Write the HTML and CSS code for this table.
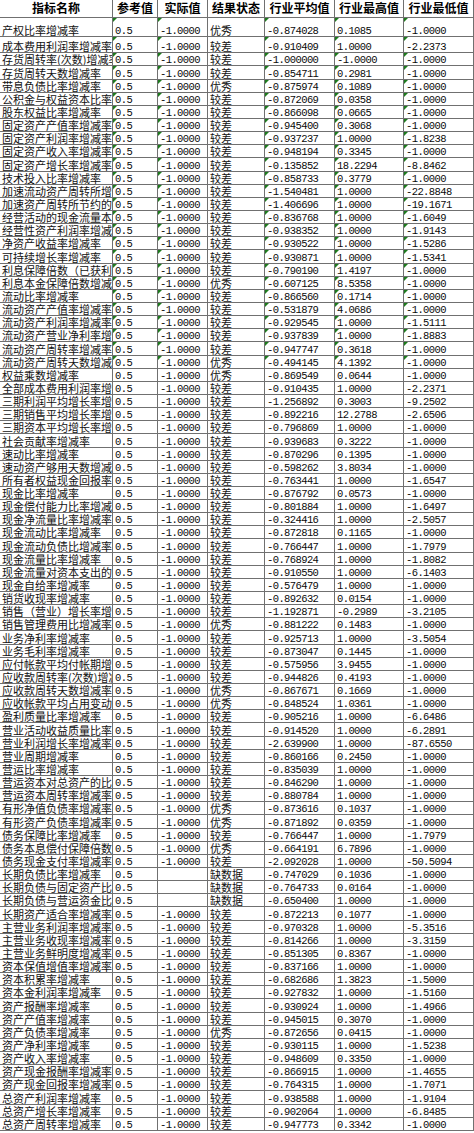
FILE: index.html
```html
<!DOCTYPE html>
<html lang="zh-CN">
<head>
<meta charset="utf-8">
<title>指标对比</title>
<link rel="stylesheet" href="styles.css">
</head>
<body>
<div class="t">
<div class="r h"><span>指标名称</span><span>参考值</span><span>实际值</span><span>结果状态</span><span>行业平均值</span><span>行业最高值</span><span>行业最低值</span></div>
<div class="r m r1"><span>产权比率增减率</span><span class="n">0.5</span><span class="n">-1.0000</span><span>优秀</span><span class="n">-0.874028</span><span class="n">0.1085</span><span class="n">-1.0000</span></div>
<div class="r m r2"><span>成本费用利润率增减率</span><span class="n">0.5</span><span class="n">-1.0000</span><span>较差</span><span class="n">-0.910409</span><span class="n">1.0000</span><span class="n">-2.2373</span></div>
<div class="r m"><span>存货周转率(次数)增减率</span><span class="n">0.5</span><span class="n">-1.0000</span><span>较差</span><span class="n">-1.000000</span><span class="n">-1.0000</span><span class="n">-1.0000</span></div>
<div class="r m"><span>存货周转天数增减率</span><span class="n">0.5</span><span class="n">-1.0000</span><span>较差</span><span class="n">-0.854711</span><span class="n">0.2981</span><span class="n">-1.0000</span></div>
<div class="r m"><span>带息负债比率增减率</span><span class="n">0.5</span><span class="n">-1.0000</span><span>优秀</span><span class="n">-0.875974</span><span class="n">0.1089</span><span class="n">-1.0000</span></div>
<div class="r m"><span>公积金与权益资本比率</span><span class="n">0.5</span><span class="n">-1.0000</span><span>较差</span><span class="n">-0.872069</span><span class="n">0.0358</span><span class="n">-1.0000</span></div>
<div class="r m"><span>股东权益比率增减率</span><span class="n">0.5</span><span class="n">-1.0000</span><span>较差</span><span class="n">-0.866098</span><span class="n">0.0665</span><span class="n">-1.0000</span></div>
<div class="r m"><span>固定资产产值率增减率</span><span class="n">0.5</span><span class="n">-1.0000</span><span>较差</span><span class="n">-0.945400</span><span class="n">0.3068</span><span class="n">-1.0000</span></div>
<div class="r m"><span>固定资产利润率增减率</span><span class="n">0.5</span><span class="n">-1.0000</span><span>较差</span><span class="n">-0.937237</span><span class="n">1.0000</span><span class="n">-1.8238</span></div>
<div class="r m"><span>固定资产收入率增减率</span><span class="n">0.5</span><span class="n">-1.0000</span><span>较差</span><span class="n">-0.948194</span><span class="n">0.3345</span><span class="n">-1.0000</span></div>
<div class="r m"><span>固定资产增长率增减率</span><span class="n">0.5</span><span class="n">-1.0000</span><span>较差</span><span class="n">-0.135852</span><span class="n">18.2294</span><span class="n">-8.8462</span></div>
<div class="r m"><span>技术投入比率增减率</span><span class="n">0.5</span><span class="n">-1.0000</span><span>较差</span><span class="n">-0.858733</span><span class="n">0.3779</span><span class="n">-1.0000</span></div>
<div class="r m"><span>加速流动资产周转所增加</span><span class="n">0.5</span><span class="n">-1.0000</span><span>较差</span><span class="n">-1.540481</span><span class="n">1.0000</span><span class="n">-22.8848</span></div>
<div class="r m"><span>加速资产周转所节约的资</span><span class="n">0.5</span><span class="n">-1.0000</span><span>较差</span><span class="n">-1.406696</span><span class="n">1.0000</span><span class="n">-19.1671</span></div>
<div class="r m"><span>经营活动的现金流量本</span><span class="n">0.5</span><span class="n">-1.0000</span><span>较差</span><span class="n">-0.836768</span><span class="n">1.0000</span><span class="n">-1.6049</span></div>
<div class="r m"><span>经营性资产利润率增减率</span><span class="n">0.5</span><span class="n">-1.0000</span><span>较差</span><span class="n">-0.938352</span><span class="n">1.0000</span><span class="n">-1.9143</span></div>
<div class="r m"><span>净资产收益率增减率</span><span class="n">0.5</span><span class="n">-1.0000</span><span>较差</span><span class="n">-0.930522</span><span class="n">1.0000</span><span class="n">-1.5286</span></div>
<div class="r m"><span>可持续增长率增减率</span><span class="n">0.5</span><span class="n">-1.0000</span><span>较差</span><span class="n">-0.930871</span><span class="n">1.0000</span><span class="n">-1.5341</span></div>
<div class="r m"><span>利息保障倍数（已获利息</span><span class="n">0.5</span><span class="n">-1.0000</span><span>较差</span><span class="n">-0.790190</span><span class="n">1.4197</span><span class="n">-1.0000</span></div>
<div class="r m"><span>利息本金保障倍数增减率</span><span class="n">0.5</span><span class="n">-1.0000</span><span>优秀</span><span class="n">-0.607125</span><span class="n">8.5358</span><span class="n">-1.0000</span></div>
<div class="r m"><span>流动比率增减率</span><span class="n">0.5</span><span class="n">-1.0000</span><span>较差</span><span class="n">-0.866560</span><span class="n">0.1714</span><span class="n">-1.0000</span></div>
<div class="r m"><span>流动资产产值率增减率</span><span class="n">0.5</span><span class="n">-1.0000</span><span>较差</span><span class="n">-0.531879</span><span class="n">4.0686</span><span class="n">-1.0000</span></div>
<div class="r m"><span>流动资产利润率增减率</span><span class="n">0.5</span><span class="n">-1.0000</span><span>较差</span><span class="n">-0.929545</span><span class="n">1.0000</span><span class="n">-1.5111</span></div>
<div class="r m"><span>流动资产营业净利率增减</span><span class="n">0.5</span><span class="n">-1.0000</span><span>较差</span><span class="n">-0.937839</span><span class="n">1.0000</span><span class="n">-1.8883</span></div>
<div class="r m"><span>流动资产周转率增减率</span><span class="n">0.5</span><span class="n">-1.0000</span><span>较差</span><span class="n">-0.947747</span><span class="n">0.3618</span><span class="n">-1.0000</span></div>
<div class="r m"><span>流动资产周转天数增减率</span><span class="n">0.5</span><span class="n">-1.0000</span><span>优秀</span><span class="n">-0.494145</span><span class="n">4.1392</span><span class="n">-1.0000</span></div>
<div class="r"><span>权益乘数增减率</span><span class="n">0.5</span><span class="n">-1.0000</span><span>优秀</span><span class="n">-0.869549</span><span class="n">0.0644</span><span class="n">-1.0000</span></div>
<div class="r"><span>全部成本费用利润率增减</span><span class="n">0.5</span><span class="n">-1.0000</span><span>较差</span><span class="n">-0.910435</span><span class="n">1.0000</span><span class="n">-2.2371</span></div>
<div class="r"><span>三期利润平均增长率增减</span><span class="n">0.5</span><span class="n">-1.0000</span><span>较差</span><span class="n">-1.256892</span><span class="n">0.3003</span><span class="n">-9.2502</span></div>
<div class="r"><span>三期销售平均增长率增减</span><span class="n">0.5</span><span class="n">-1.0000</span><span>较差</span><span class="n">-0.892216</span><span class="n">12.2788</span><span class="n">-2.6506</span></div>
<div class="r"><span>三期资本平均增长率增减</span><span class="n">0.5</span><span class="n">-1.0000</span><span>较差</span><span class="n">-0.796869</span><span class="n">1.0000</span><span class="n">-1.0000</span></div>
<div class="r"><span>社会贡献率增减率</span><span class="n">0.5</span><span class="n">-1.0000</span><span>较差</span><span class="n">-0.939683</span><span class="n">0.3222</span><span class="n">-1.0000</span></div>
<div class="r"><span>速动比率增减率</span><span class="n">0.5</span><span class="n">-1.0000</span><span>较差</span><span class="n">-0.870296</span><span class="n">0.1395</span><span class="n">-1.0000</span></div>
<div class="r"><span>速动资产够用天数增减率</span><span class="n">0.5</span><span class="n">-1.0000</span><span>较差</span><span class="n">-0.598262</span><span class="n">3.8034</span><span class="n">-1.0000</span></div>
<div class="r"><span>所有者权益现金回报率</span><span class="n">0.5</span><span class="n">-1.0000</span><span>较差</span><span class="n">-0.763441</span><span class="n">1.0000</span><span class="n">-1.6547</span></div>
<div class="r"><span>现金比率增减率</span><span class="n">0.5</span><span class="n">-1.0000</span><span>较差</span><span class="n">-0.876792</span><span class="n">0.0573</span><span class="n">-1.0000</span></div>
<div class="r"><span>现金偿付能力比率增减率</span><span class="n">0.5</span><span class="n">-1.0000</span><span>较差</span><span class="n">-0.801884</span><span class="n">1.0000</span><span class="n">-1.6497</span></div>
<div class="r"><span>现金净流量比率增减率</span><span class="n">0.5</span><span class="n">-1.0000</span><span>较差</span><span class="n">-0.324416</span><span class="n">1.0000</span><span class="n">-2.5057</span></div>
<div class="r"><span>现金流动比率增减率</span><span class="n">0.5</span><span class="n">-1.0000</span><span>较差</span><span class="n">-0.872818</span><span class="n">0.1165</span><span class="n">-1.0000</span></div>
<div class="r"><span>现金流动负债比增减率</span><span class="n">0.5</span><span class="n">-1.0000</span><span>较差</span><span class="n">-0.766447</span><span class="n">1.0000</span><span class="n">-1.7979</span></div>
<div class="r"><span>现金流量比率增减率</span><span class="n">0.5</span><span class="n">-1.0000</span><span>较差</span><span class="n">-0.768924</span><span class="n">1.0000</span><span class="n">-1.8082</span></div>
<div class="r"><span>现金流量对资本支出的比</span><span class="n">0.5</span><span class="n">-1.0000</span><span>较差</span><span class="n">-0.910550</span><span class="n">1.0000</span><span class="n">-6.1403</span></div>
<div class="r"><span>现金自给率增减率</span><span class="n">0.5</span><span class="n">-1.0000</span><span>较差</span><span class="n">-0.576479</span><span class="n">1.0000</span><span class="n">-1.0000</span></div>
<div class="r"><span>销货收现率增减率</span><span class="n">0.5</span><span class="n">-1.0000</span><span>较差</span><span class="n">-0.892632</span><span class="n">0.0154</span><span class="n">-1.0000</span></div>
<div class="r"><span>销售（营业）增长率增减率</span><span class="n">0.5</span><span class="n">-1.0000</span><span>较差</span><span class="n">-1.192871</span><span class="n">-0.2989</span><span class="n">-3.2105</span></div>
<div class="r"><span>销售管理费用比增减率</span><span class="n">0.5</span><span class="n">-1.0000</span><span>优秀</span><span class="n">-0.881222</span><span class="n">0.1483</span><span class="n">-1.0000</span></div>
<div class="r"><span>业务净利率增减率</span><span class="n">0.5</span><span class="n">-1.0000</span><span>较差</span><span class="n">-0.925713</span><span class="n">1.0000</span><span class="n">-3.5054</span></div>
<div class="r"><span>业务毛利率增减率</span><span class="n">0.5</span><span class="n">-1.0000</span><span>较差</span><span class="n">-0.873047</span><span class="n">0.1445</span><span class="n">-1.0000</span></div>
<div class="r"><span>应付帐款平均付帐期增减</span><span class="n">0.5</span><span class="n">-1.0000</span><span>较差</span><span class="n">-0.575956</span><span class="n">3.9455</span><span class="n">-1.0000</span></div>
<div class="r"><span>应收款周转率(次数)增减率</span><span class="n">0.5</span><span class="n">-1.0000</span><span>较差</span><span class="n">-0.944826</span><span class="n">0.4193</span><span class="n">-1.0000</span></div>
<div class="r"><span>应收款周转天数增减率</span><span class="n">0.5</span><span class="n">-1.0000</span><span>优秀</span><span class="n">-0.867671</span><span class="n">0.1669</span><span class="n">-1.0000</span></div>
<div class="r"><span>应收帐款平均占用变动率</span><span class="n">0.5</span><span class="n">-1.0000</span><span>优秀</span><span class="n">-0.848524</span><span class="n">1.0361</span><span class="n">-1.0000</span></div>
<div class="r"><span>盈利质量比率增减率</span><span class="n">0.5</span><span class="n">-1.0000</span><span>较差</span><span class="n">-0.905216</span><span class="n">1.0000</span><span class="n">-6.6486</span></div>
<div class="r"><span>营业活动收益质量比率</span><span class="n">0.5</span><span class="n">-1.0000</span><span>较差</span><span class="n">-0.914520</span><span class="n">1.0000</span><span class="n">-6.2891</span></div>
<div class="r"><span>营业利润增长率增减率</span><span class="n">0.5</span><span class="n">-1.0000</span><span>较差</span><span class="n">-2.639900</span><span class="n">1.0000</span><span class="n">-87.6550</span></div>
<div class="r"><span>营业周期增减率</span><span class="n">0.5</span><span class="n">-1.0000</span><span>较差</span><span class="n">-0.860166</span><span class="n">0.2450</span><span class="n">-1.0000</span></div>
<div class="r"><span>营运比率增减率</span><span class="n">0.5</span><span class="n">-1.0000</span><span>较差</span><span class="n">-0.835039</span><span class="n">1.0000</span><span class="n">-1.0000</span></div>
<div class="r"><span>营运资本对总资产的比率</span><span class="n">0.5</span><span class="n">-1.0000</span><span>较差</span><span class="n">-0.846290</span><span class="n">1.0000</span><span class="n">-1.0000</span></div>
<div class="r"><span>营运资本周转率增减率</span><span class="n">0.5</span><span class="n">-1.0000</span><span>较差</span><span class="n">-0.880784</span><span class="n">1.0000</span><span class="n">-1.0000</span></div>
<div class="r"><span>有形净值负债率增减率</span><span class="n">0.5</span><span class="n">-1.0000</span><span>优秀</span><span class="n">-0.873616</span><span class="n">0.1037</span><span class="n">-1.0000</span></div>
<div class="r"><span>有形资产负债率增减率</span><span class="n">0.5</span><span class="n">-1.0000</span><span>优秀</span><span class="n">-0.871892</span><span class="n">0.0359</span><span class="n">-1.0000</span></div>
<div class="r"><span>债务保障比率增减率</span><span class="n">0.5</span><span class="n">-1.0000</span><span>较差</span><span class="n">-0.766447</span><span class="n">1.0000</span><span class="n">-1.7979</span></div>
<div class="r"><span>债务本息偿付保障倍数</span><span class="n">0.5</span><span class="n">-1.0000</span><span>优秀</span><span class="n">-0.664191</span><span class="n">6.7896</span><span class="n">-1.0000</span></div>
<div class="r"><span>债务现金支付率增减率</span><span class="n">0.5</span><span class="n">-1.0000</span><span>较差</span><span class="n">-2.092028</span><span class="n">1.0000</span><span class="n">-50.5094</span></div>
<div class="r"><span>长期负债比率增减率</span><span class="n">0.5</span><span class="n"></span><span>缺数据</span><span class="n">-0.747029</span><span class="n">0.1036</span><span class="n">-1.0000</span></div>
<div class="r"><span>长期负债与固定资产比率</span><span class="n">0.5</span><span class="n"></span><span>缺数据</span><span class="n">-0.764733</span><span class="n">0.0164</span><span class="n">-1.0000</span></div>
<div class="r"><span>长期负债与营运资金比率</span><span class="n">0.5</span><span class="n"></span><span>缺数据</span><span class="n">-0.650400</span><span class="n">1.0000</span><span class="n">-1.0000</span></div>
<div class="r"><span>长期资产适合率增减率</span><span class="n">0.5</span><span class="n">-1.0000</span><span>较差</span><span class="n">-0.872213</span><span class="n">0.1077</span><span class="n">-1.0000</span></div>
<div class="r"><span>主营业务利润率增减率</span><span class="n">0.5</span><span class="n">-1.0000</span><span>较差</span><span class="n">-0.970328</span><span class="n">1.0000</span><span class="n">-5.3516</span></div>
<div class="r"><span>主营业务收现率增减率</span><span class="n">0.5</span><span class="n">-1.0000</span><span>较差</span><span class="n">-0.814266</span><span class="n">1.0000</span><span class="n">-3.3159</span></div>
<div class="r"><span>主营业务鲜明度增减率</span><span class="n">0.5</span><span class="n">-1.0000</span><span>较差</span><span class="n">-0.851305</span><span class="n">0.8367</span><span class="n">-1.0000</span></div>
<div class="r"><span>资本保值增值率增减率</span><span class="n">0.5</span><span class="n">-1.0000</span><span>较差</span><span class="n">-0.837166</span><span class="n">1.0000</span><span class="n">-1.0000</span></div>
<div class="r"><span>资本积累率增减率</span><span class="n">0.5</span><span class="n">-1.0000</span><span>较差</span><span class="n">-0.682686</span><span class="n">1.3823</span><span class="n">-1.5000</span></div>
<div class="r"><span>资本金利润率增减率</span><span class="n">0.5</span><span class="n">-1.0000</span><span>较差</span><span class="n">-0.927832</span><span class="n">1.0000</span><span class="n">-1.5160</span></div>
<div class="r"><span>资产报酬率增减率</span><span class="n">0.5</span><span class="n">-1.0000</span><span>较差</span><span class="n">-0.930924</span><span class="n">1.0000</span><span class="n">-1.4966</span></div>
<div class="r"><span>资产产值率增减率</span><span class="n">0.5</span><span class="n">-1.0000</span><span>较差</span><span class="n">-0.945015</span><span class="n">0.3070</span><span class="n">-1.0000</span></div>
<div class="r"><span>资产负债率增减率</span><span class="n">0.5</span><span class="n">-1.0000</span><span>优秀</span><span class="n">-0.872656</span><span class="n">0.0415</span><span class="n">-1.0000</span></div>
<div class="r"><span>资产净利率增减率</span><span class="n">0.5</span><span class="n">-1.0000</span><span>较差</span><span class="n">-0.930115</span><span class="n">1.0000</span><span class="n">-1.5238</span></div>
<div class="r"><span>资产收入率增减率</span><span class="n">0.5</span><span class="n">-1.0000</span><span>较差</span><span class="n">-0.948609</span><span class="n">0.3350</span><span class="n">-1.0000</span></div>
<div class="r"><span>资产现金报酬率增减率</span><span class="n">0.5</span><span class="n">-1.0000</span><span>较差</span><span class="n">-0.866915</span><span class="n">1.0000</span><span class="n">-1.4655</span></div>
<div class="r"><span>资产现金回报率增减率</span><span class="n">0.5</span><span class="n">-1.0000</span><span>较差</span><span class="n">-0.764315</span><span class="n">1.0000</span><span class="n">-1.7071</span></div>
<div class="r"><span>总资产利润率增减率</span><span class="n">0.5</span><span class="n">-1.0000</span><span>较差</span><span class="n">-0.938588</span><span class="n">1.0000</span><span class="n">-1.9104</span></div>
<div class="r"><span>总资产增长率增减率</span><span class="n">0.5</span><span class="n">-1.0000</span><span>较差</span><span class="n">-0.902064</span><span class="n">1.0000</span><span class="n">-6.8485</span></div>
<div class="r"><span>总资产周转率增减率</span><span class="n">0.5</span><span class="n">-1.0000</span><span>较差</span><span class="n">-0.947773</span><span class="n">0.3342</span><span class="n">-1.0000</span></div>
</div>
</body>
</html>
```
FILE: styles.css
```css
html, body {
  margin: 0;
  padding: 0;
  background: #ffffff;
}

body {
  font-family: "Noto Sans CJK SC", "Noto Sans", sans-serif;
  color: #111111;
}

.t {
  width: 474px;
  overflow: hidden;
}

.r {
  display: grid;
  grid-template-columns: 113px 45px 50px 57px 70px 69px 70px;
  height: 13.15px;
}

.r > span {
  box-sizing: border-box;
  position: relative;
  display: flex;
  align-items: flex-end;
  overflow: hidden;
  white-space: nowrap;
  padding-left: 2px;
  border-right: 1px solid #707070;
  border-bottom: 1px solid #707070;
  font-size: 11px;
  line-height: 12px;
}

.r > span.n {
  font-family: "Liberation Mono", monospace;
  font-size: 10.5px;
  letter-spacing: -0.6px;
  line-height: 9px;
  color: #0a0a0a;
}

.r.m > span.n:not(:empty)::before {
  content: "";
  position: absolute;
  left: 0;
  top: 0;
  width: 0;
  height: 0;
  border-top: 4px solid #1e7b1e;
  border-right: 4px solid transparent;
}

.r.h {
  height: 17.5px;
}

.r.h > span {
  justify-content: center;
  align-items: center;
  padding-left: 0;
  font-size: 12px;
  font-weight: 700;
  line-height: 14px;
  color: #000000;
}

.r.r1 {
  height: 19.2px;
}

.r.r2 {
  height: 16.6px;
}
```
